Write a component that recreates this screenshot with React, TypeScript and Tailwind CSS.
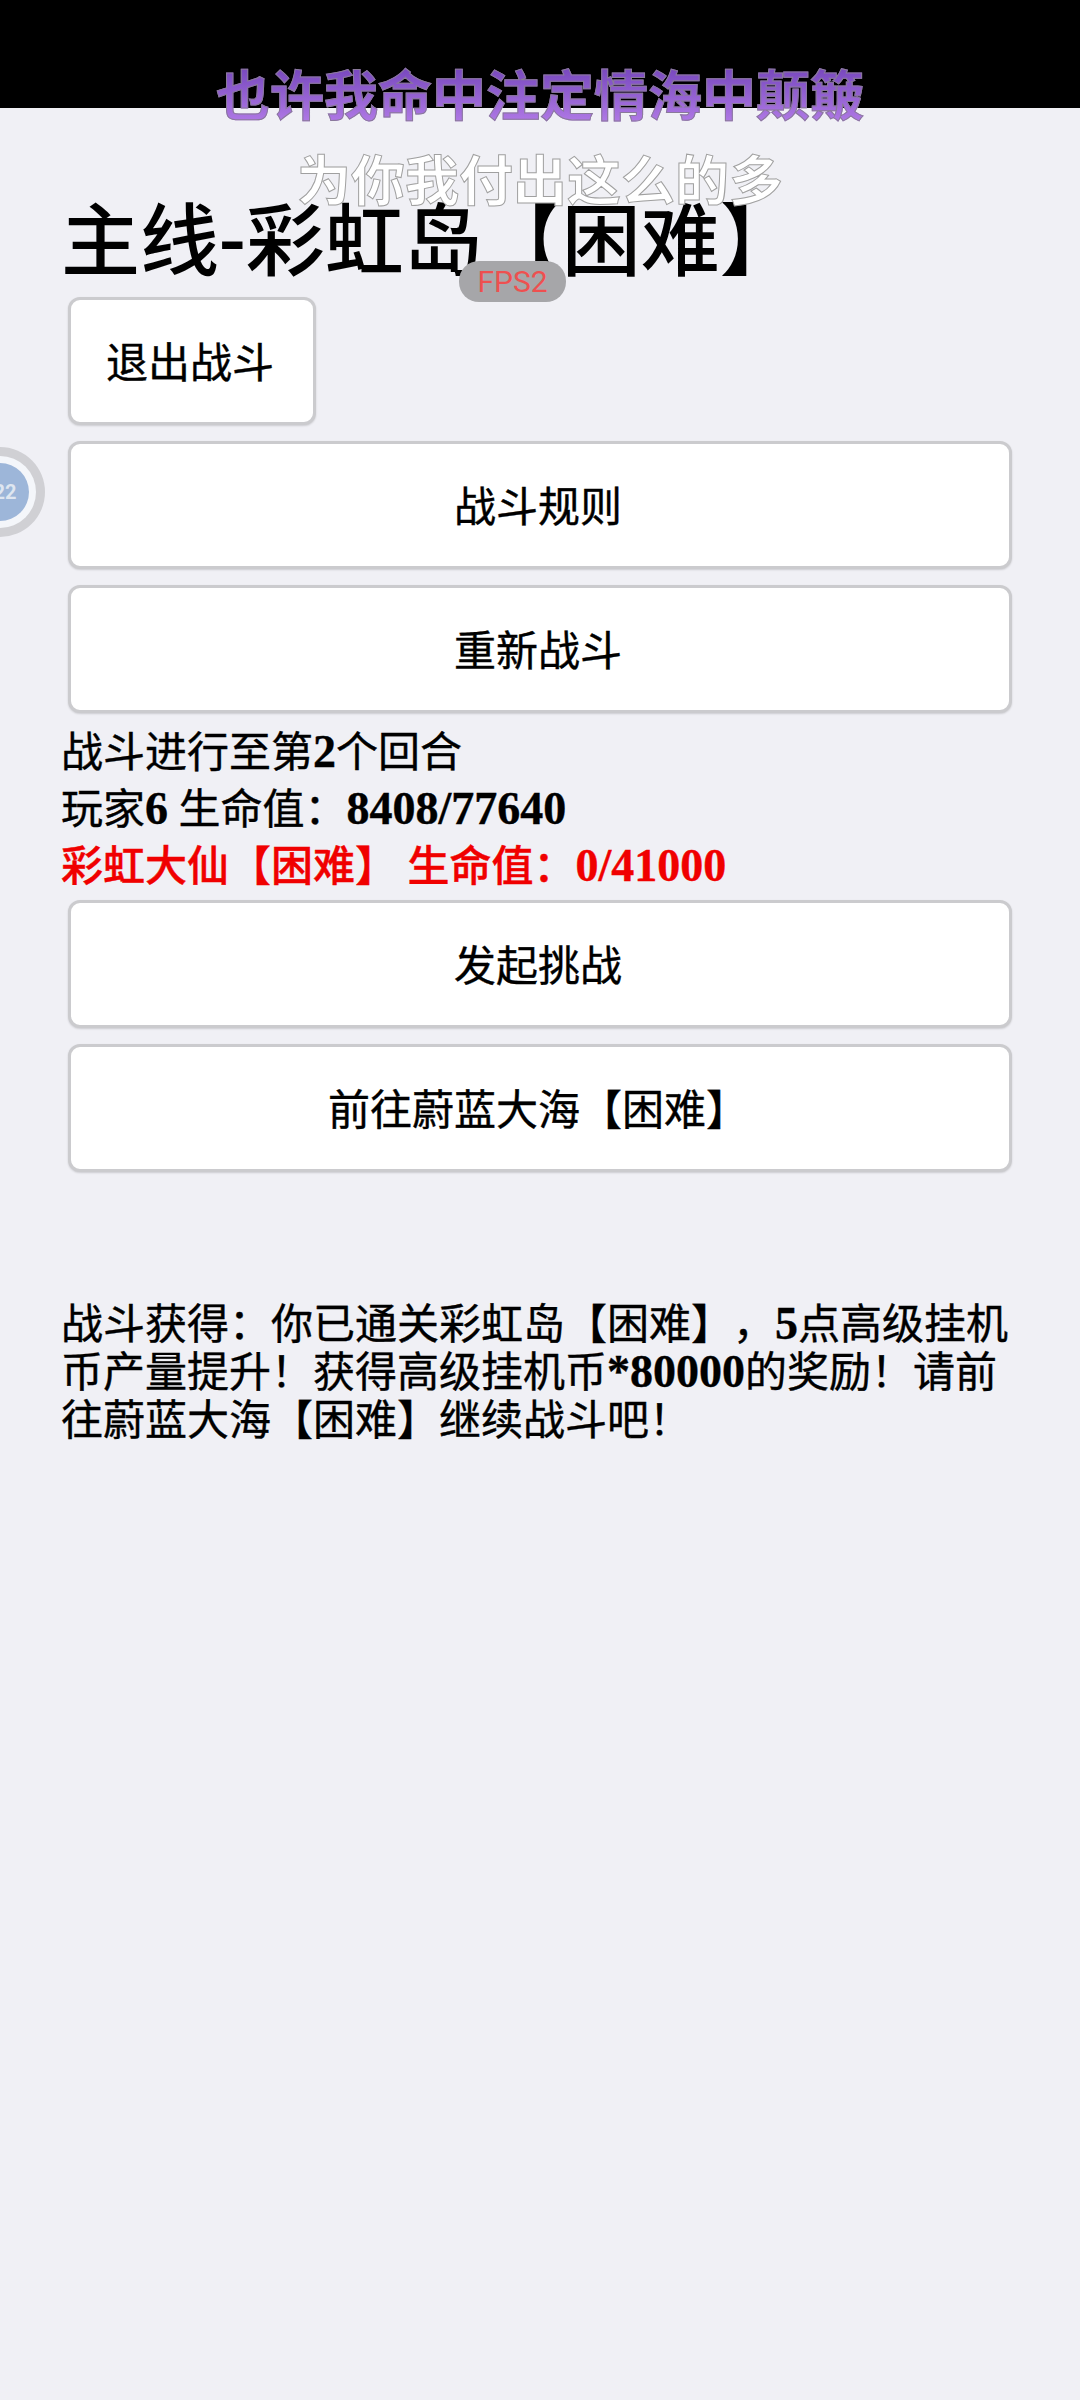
const cjk = 'font-["Liberation_Serif","Noto_Sans_CJK_SC",serif]';

function Num({ children }: { children: string }) {
    return <span className="text-[46px] leading-none font-bold">{children}</span>;
}

function BattleButton({ label, narrow }: { label: string; narrow?: boolean }) {
    return (
        <button
            className={`flex h-[128px] items-center justify-center rounded-[12px] border-[3px] border-[#cbcbce] bg-white pt-[7px] pr-[4px] text-[42px] font-normal text-black shadow-[0_1px_2px_rgba(0,0,0,0.15)] [-webkit-text-stroke:0.4px_#000] ${narrow ? "w-[248px]" : "w-[944px]"}`}
        >
            {label}
        </button>
    );
}

export default function App() {
    return (
        <div className={`relative min-h-[2400px] overflow-hidden bg-[#f0f0f5] text-black [text-spacing-trim:space-all] ${cjk}`}>
            <div className="h-[108px] bg-black" />

            <div className="pl-[61px] pr-[60px]">
                <h1 className="mt-[90px] h-[90px] text-[79px] leading-[90px] font-medium whitespace-nowrap">主线<span className="font-['Roboto',sans-serif]">-</span>彩虹岛【困难】</h1>

                <div className="mt-[9px] flex flex-col gap-[16px] pl-[7px]">
                    <BattleButton label="退出战斗" narrow />
                    <BattleButton label="战斗规则" />
                    <BattleButton label="重新战斗" />
                </div>

                <div className="mt-[12px] text-[42px] leading-[57px] font-normal [-webkit-text-stroke:0.4px]">
                    <p>战斗进行至第<Num>2</Num>个回合</p>
                    <p>玩家<Num>6</Num> 生命值：<Num>8408/77640</Num></p>
                    <p className="font-medium text-[#f00000]">彩虹大仙【困难】 生命值：<Num>0/41000</Num></p>
                </div>

                <div className="mt-[4px] flex flex-col gap-[16px] pl-[7px]">
                    <BattleButton label="发起挑战" />
                    <BattleButton label="前往蔚蓝大海【困难】" />
                </div>

                <p className="mt-[129px] text-[42px] leading-[48px] font-normal [-webkit-text-stroke:0.4px_#000]">
                    战斗获得：你已通关彩虹岛【困难】，<Num>5</Num>点高级挂机币产量提升！获得高级挂机币<Num>*80000</Num>的奖励！请前往蔚蓝大海【困难】继续战斗吧！
                </p>
            </div>

            {/* lyric overlay */}
            <div className="absolute top-[60px] left-0 w-full text-center font-['Noto_Sans_CJK_SC',sans-serif] text-[54px] leading-[66px] font-bold">
                <p className="inline-block bg-gradient-to-b from-[#7040b8] to-[#b47ce8] bg-clip-text text-transparent [-webkit-text-stroke:1px_#8a7a9a]">也许我命中注定情海中颠簸</p>
            </div>
            <div className="absolute top-[145px] left-0 w-full text-center font-['Noto_Sans_CJK_SC',sans-serif] text-[54px] leading-[66px] font-bold text-white [-webkit-text-stroke:1px_#a0a0a0]">
                为你我付出这么的多
            </div>

            {/* fps badge */}
            <div className="absolute top-[261px] left-[459px] flex h-[41px] w-[107px] items-center justify-center rounded-[20px] bg-[#a6a6a9] font-['Roboto',sans-serif] text-[30px] text-[#ee5050]">
                FPS2
            </div>

            {/* floating ball */}
            <div className="absolute top-[447px] left-[-45px] flex h-[90px] w-[90px] items-center justify-center rounded-full bg-[#d0d0d4]">
                <div className="flex h-[72px] w-[72px] items-center justify-center rounded-full bg-[#f4f6fa]">
                    <div className="flex h-[58px] w-[58px] items-center justify-center rounded-full bg-[#9db6d9] pl-[10px] font-['Roboto',sans-serif] text-[20px] font-bold text-[#dfe6f0]">
                        22
                    </div>
                </div>
            </div>
        </div>
    );
}
